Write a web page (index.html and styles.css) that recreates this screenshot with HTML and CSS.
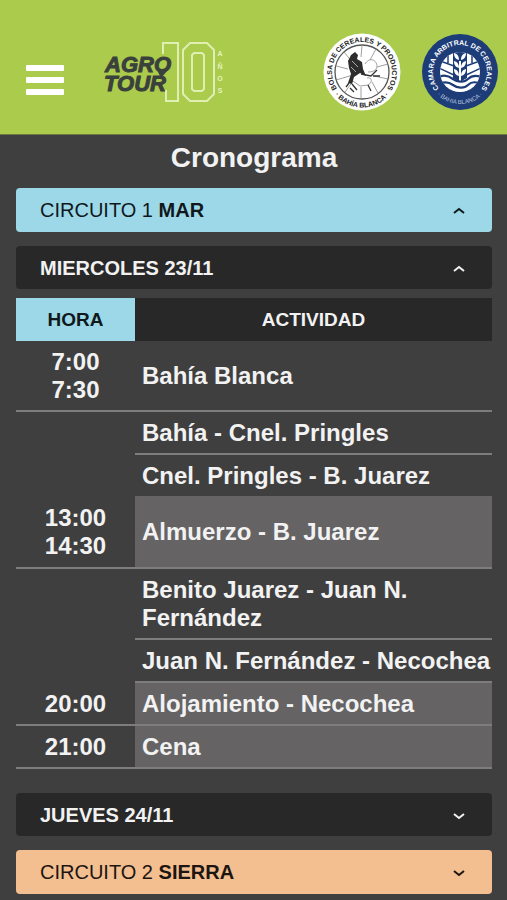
FILE: index.html
```
<!DOCTYPE html>
<html lang="es">
<head>
    <meta charset="UTF-8">
    <meta name="viewport" content="width=device-width, initial-scale=1.0">
    <title>Agro Tour - Cronograma</title>
    <link rel="stylesheet" href="styles.css">
</head>
<body>
    <header class="header">
        <button type="button" class="menu-btn" aria-label="Menú">
            <span></span>
            <span></span>
            <span></span>
        </button>
        <a href="#" class="logo" aria-label="Agro Tour 10 años">
            <svg width="120" height="60" viewBox="0 0 120 60">
                <g fill="none" stroke="#e0eeb2" stroke-width="2">
                    <path d="M59 12V1H74V59H62V48"/>
                    <path d="M86 1H103L110 8V52L103 59H86L79 52V8Z"/>
                    <path d="M90 11H98L100 13V47L98 49H90L88 47V13Z"/>
                </g>
                <g class="logo-text">
                    <text x="1" y="30">AGRO</text>
                    <text x="0" y="49">TOUR</text>
                </g>
                <path d="M53 28H64L57 36Z" fill="#3a403c"/>
                <g class="logo-years">
                    <text x="116" y="14">A</text>
                    <text x="116" y="27">Ñ</text>
                    <text x="116" y="39">O</text>
                    <text x="116" y="51">S</text>
                </g>
            </svg>
        </a>
        <div class="seals">
            <a href="#" aria-label="Bolsa de Cereales y Productos">
                <svg width="78" height="78" viewBox="0 0 78 78">
                    <defs>
                        <path id="bolsa-top" d="M17.8 60.2A30 30 0 1 1 60.2 60.2"/>
                        <path id="bolsa-bottom" d="M3.5 39A35.5 35.5 0 0 0 74.5 39"/>
                    </defs>
                    <circle cx="39" cy="39" r="38.5" fill="#fff"/>
                    <circle cx="39" cy="39" r="27" fill="none" stroke="#555" stroke-width="1.3"/>
                    <g fill="none" stroke="#888" stroke-width=".8">
                        <path d="M39 12L38 24M53 16L47 27M21 19L30 30M13 33L25 36M13 47L30 42M22 59L30 48M38 66V54M55 60L49 49M65 46L51 43M65 31L54 34"/>
                        <path d="M42 31C46 24 54 26 54 34C53 38 49 39 45 39M44 45C49 44 50 49 45 52L37 53L30 48"/>
                    </g>
                    <path d="M28 22L32 19L35 22L34 26L39 29L40 36L43 43L37 40L31 44L29 51L25 50L28 41L26 35L25 28Z" fill="#2d2d2d"/>
                    <path d="M38 41L48 43L54 37M50 43H57M26 50L23 54M29 51L34 57M27 55L31 59M45 52L48 58" fill="none" stroke="#333" stroke-width="1.3"/>
                    <path d="M29 28L35 34M28 34L33 39" stroke="#aaa" stroke-width="1"/>
                    <text class="seal-text dark"><textPath href="#bolsa-top" startOffset="50%">BOLSA DE CEREALES Y PRODUCTOS</textPath></text>
                    <text class="seal-text dark"><textPath href="#bolsa-bottom" startOffset="50%">· BAHÍA BLANCA ·</textPath></text>
                </svg>
            </a>
            <a href="#" aria-label="Cámara Arbitral de Cereales">
                <svg width="78" height="78" viewBox="0 0 78 78">
                    <defs>
                        <path id="camara-top" d="M20 58A26.9 26.9 0 1 1 58 58"/>
                        <path id="camara-bottom" d="M7 39A32 32 0 0 0 71 39"/>
                        <clipPath id="camara-clip"><circle cx="39" cy="39" r="20"/></clipPath>
                    </defs>
                    <circle cx="39" cy="39" r="38" fill="#1d3c78"/>
                    <g clip-path="url(#camara-clip)">
                        <rect x="19" y="19" width="40" height="40" fill="#fff"/>
                        <path d="M32 18H46V45L39 49L32 45Z" fill="#1d3c78"/>
                        <g fill="#fff">
                            <path id="grano" d="M38 27C34 26 33 23 33 20C37 21 38 24 38 27ZM40 27C44 26 45 23 45 20C41 21 40 24 40 27Z"/>
                            <use href="#grano" y="8"/>
                            <use href="#grano" y="16"/>
                            <path d="M38 28H40V48H38Z"/>
                        </g>
                        <g fill="none" stroke="#1d3c78" stroke-width="1.5">
                            <path d="M27 20V30M51 20V30M19 28L33 33M59 28L45 33M18 35L35 43M60 35L43 43"/>
                            <path d="M18 44C24 41 28 43 32 46S43 50 47 46S55 42 61 44" stroke-width="2.2"/>
                            <path d="M18 51C24 48 28 49 32 52S43 56 47 52S55 49 61 51" stroke-width="2.2"/>
                        </g>
                    </g>
                    <text class="seal-text light"><textPath href="#camara-top" startOffset="50%">CAMARA ARBITRAL DE CEREALES</textPath></text>
                    <text class="seal-text light thin"><textPath href="#camara-bottom" startOffset="50%">· BAHIA BLANCA ·</textPath></text>
                </svg>
            </a>
        </div>
    </header>

    <main class="container">
        <h1>Cronograma</h1>

        <button type="button" class="bar mar" aria-expanded="true">
            <span>CIRCUITO 1 <b>MAR</b></span>
            <svg width="14" height="10" viewBox="0 0 14 10"><path d="M2 8L7 4L12 8"/></svg>
        </button>
        <button type="button" class="bar dia" aria-expanded="true">
            <b>MIERCOLES 23/11</b>
            <svg width="14" height="10" viewBox="0 0 14 10"><path d="M2 8L7 4L12 8"/></svg>
        </button>

        <table class="agenda">
            <thead>
                <tr>
                    <th class="hora">HORA</th>
                    <th>ACTIVIDAD</th>
                </tr>
            </thead>
            <tbody>
                <tr>
                    <td>7:00<br>7:30</td>
                    <td>Bahía Blanca</td>
                </tr>
                <tr>
                    <td class="sin-borde"></td>
                    <td>Bahía - Cnel. Pringles</td>
                </tr>
                <tr>
                    <td class="sin-borde"></td>
                    <td class="sin-borde">Cnel. Pringles - B. Juarez</td>
                </tr>
                <tr class="almuerzo">
                    <td>13:00<br>14:30</td>
                    <td class="pausa">Almuerzo - B. Juarez</td>
                </tr>
                <tr>
                    <td class="sin-borde"></td>
                    <td>Benito Juarez - Juan N. Fernández</td>
                </tr>
                <tr>
                    <td class="sin-borde"></td>
                    <td>Juan N. Fernández - Necochea</td>
                </tr>
                <tr>
                    <td>20:00</td>
                    <td class="pausa">Alojamiento - Necochea</td>
                </tr>
                <tr>
                    <td>21:00</td>
                    <td class="pausa">Cena</td>
                </tr>
            </tbody>
        </table>

        <button type="button" class="bar dia" aria-expanded="false">
            <b>JUEVES 24/11</b>
            <svg width="14" height="10" viewBox="0 0 14 10"><path d="M2 4L7 8L12 4"/></svg>
        </button>
        <button type="button" class="bar sierra" aria-expanded="false">
            <span>CIRCUITO 2 <b>SIERRA</b></span>
            <svg width="14" height="10" viewBox="0 0 14 10"><path d="M2 4L7 8L12 4"/></svg>
        </button>
    </main>
</body>
</html>
```
FILE: styles.css
```
*{
    box-sizing: border-box;
}
body{
    margin: 0;
    background-color: #3f3f3f;
    color: #f2f2f2;
    font-family: "Liberation Sans", Arial, sans-serif;
}
.header{
    display: flex;
    align-items: center;
    padding: 33px 8px 23px 26px;
    background-color: #aacb4c;
    border-bottom: 1px solid #6c7a42;
}
.menu-btn{
    display: flex;
    flex-direction: column;
    gap: 6px;
    margin: 15px 40px 0 0;
    padding: 0;
    border: none;
    background: none;
}
.menu-btn span{
    width: 38px;
    height: 6px;
    border-radius: 1px;
    background-color: #fff;
}
.logo svg, .seals svg{
    display: block;
}
.logo-text{
    font: italic bold 22px "Liberation Sans", Arial, sans-serif;
    fill: #3a403c;
    stroke: #3a403c;
    stroke-width: 1;
}
.logo-years{
    font: bold 7px "Liberation Sans", sans-serif;
    fill: #e6f2c0;
    text-anchor: middle;
}
.seals{
    display: flex;
    gap: 20px;
    margin-left: auto;
}
.seal-text{
    font-size: 7px;
    font-weight: bold;
    text-anchor: middle;
}
.dark{
    fill: #222;
}
.light{
    fill: #fff;
}
.thin{
    font-size: 6px;
    font-weight: normal;
    fill: #b9c6de;
}
.container{
    padding: 7px 15px 7px 16px;
}
h1{
    margin: 0 0 14px;
    font-size: 28px;
    line-height: 32px;
    text-align: center;
}
.bar{
    display: flex;
    align-items: center;
    justify-content: space-between;
    width: 100%;
    min-height: 43px;
    margin-bottom: 14px;
    padding: 0 26px 0 24px;
    border: none;
    border-radius: 4px;
    font-family: inherit;
    font-size: 20px;
    line-height: 24px;
    text-align: left;
}
.bar svg{
    fill: none;
    stroke: currentColor;
    stroke-width: 2;
}
.mar{
    min-height: 44px;
    background-color: #9cd8e8;
    color: #10181c;
}
.dia{
    background-color: #282828;
    color: #f2f2f2;
}
.sierra{
    min-height: 44px;
    margin-bottom: 0;
    background-color: #f3be90;
    color: #1c1510;
}
.agenda{
    width: 100%;
    margin: -5px 0 24px;
    table-layout: fixed;
    border-collapse: separate;
    border-spacing: 0;
    font-size: 24px;
    font-weight: bold;
    line-height: 28px;
}
.agenda th{
    height: 43px;
    padding: 0;
    background-color: #282828;
    font-size: 19px;
}
.agenda .hora{
    width: 25%;
    background-color: #9cd8e8;
    color: #10181c;
}
.agenda td{
    padding: 7px 0 6px 7px;
    border-bottom: 2px solid #7d7d7d;
}
.agenda td:first-child{
    padding-left: 0;
    text-align: center;
}
.agenda .sin-borde{
    border-bottom: none;
}
.agenda .almuerzo td{
    padding-top: 8px;
    padding-bottom: 7px;
}
.agenda .pausa{
    background-color: #656364;
}
```
